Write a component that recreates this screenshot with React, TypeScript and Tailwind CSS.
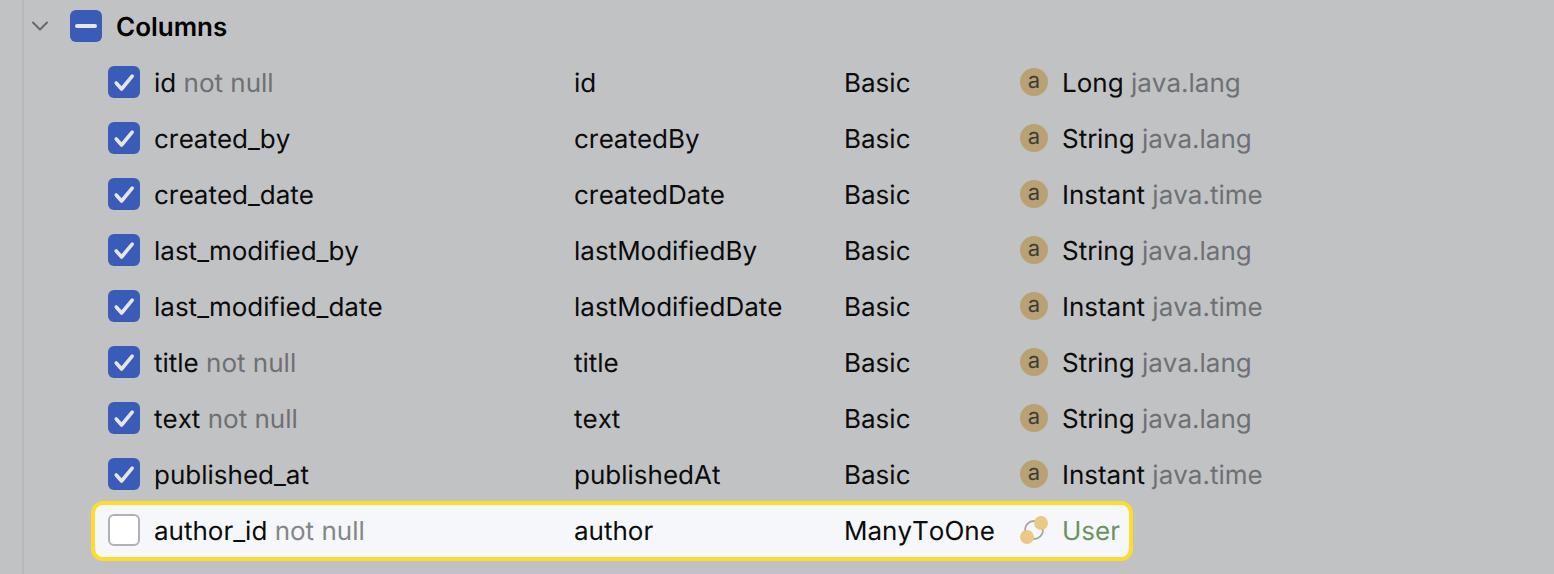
const columns = [
  { name: "id", note: "not null", attr: "id", kind: "Basic", type: "Long", pkg: "java.lang" },
  { name: "created_by", attr: "createdBy", kind: "Basic", type: "String", pkg: "java.lang" },
  { name: "created_date", attr: "createdDate", kind: "Basic", type: "Instant", pkg: "java.time" },
  { name: "last_modified_by", attr: "lastModifiedBy", kind: "Basic", type: "String", pkg: "java.lang" },
  { name: "last_modified_date", attr: "lastModifiedDate", kind: "Basic", type: "Instant", pkg: "java.time" },
  { name: "title", note: "not null", attr: "title", kind: "Basic", type: "String", pkg: "java.lang" },
  { name: "text", note: "not null", attr: "text", kind: "Basic", type: "String", pkg: "java.lang" },
  { name: "published_at", attr: "publishedAt", kind: "Basic", type: "Instant", pkg: "java.time" },
];

function CheckedBox() {
  return (
    <span className="flex h-8 w-8 shrink-0 items-center justify-center rounded-[6px] bg-[#3a5cb8]">
      <svg width="22" height="22" viewBox="0 0 22 22" fill="none">
        <path d="M3.2 12L8.6 18L19.2 5.2" stroke="#e4e6ea" strokeWidth="3.6" strokeLinecap="round" strokeLinejoin="round" />
      </svg>
    </span>
  );
}

function AttributeIcon() {
  return (
    <span className="flex h-7 w-7 shrink-0 items-center justify-center rounded-full bg-[#b9a173] pb-[3px] text-[22px] leading-none text-[#3d3d3d]">
      a
    </span>
  );
}

function RelationIcon() {
  return (
    <svg width="28" height="28" viewBox="0 0 28 28" fill="none" className="shrink-0">
      <circle cx="14" cy="14" r="9" stroke="#a3a4a6" strokeWidth="1.8" />
      <circle cx="21" cy="7" r="7" fill="#eac885" />
      <circle cx="7" cy="21" r="7" fill="#eac885" />
    </svg>
  );
}

export default function App() {
  return (
    <div className="h-[574px] w-[1554px] overflow-hidden bg-[#c1c2c4] pl-[22px] font-['Inter',sans-serif] text-[26px] text-[#0b0b0b] [font-kerning:none] [text-rendering:geometricPrecision]">
      <div className="h-full border-l-2 border-[#b7b8ba]">
        <div className="flex h-[54px] items-center pb-[2px] pl-[4px]">
          <svg width="24" height="24" viewBox="0 0 24 24" fill="none" className="shrink-0">
            <path d="M5 8.5L12 15.5L19 8.5" stroke="#66686c" strokeWidth="2" strokeLinecap="round" strokeLinejoin="round" />
          </svg>
          <span className="ml-[18px] flex h-8 w-8 items-center justify-center rounded-[6px] bg-[#3a5cb8]">
            <span className="h-[4px] w-[22px] rounded-full bg-[#e4e6ea]" />
          </span>
          <span className="ml-[14px] pt-[2px] font-semibold text-black">Columns</span>
        </div>
        <div className="flex flex-col pl-[84px]">
          {columns.map((col) => (
            <div key={col.name} className="flex h-14 items-center">
              <CheckedBox />
              <span className="ml-[14px] w-[420px] shrink-0 pt-[2px]">
                {col.name}
                {col.note && <span className="text-[#6f7074]"> {col.note}</span>}
              </span>
              <span className="w-[270px] shrink-0 pt-[2px]">{col.attr}</span>
              <span className="w-[176px] shrink-0 pt-[2px]">{col.kind}</span>
              <AttributeIcon />
              <span className="ml-[14px] pt-[2px]">
                {col.type} <span className="text-[#6f7074]">{col.pkg}</span>
              </span>
            </div>
          ))}
          <div className="-mx-[17px] -mt-[1px] flex h-[60px] w-[1042px] items-center rounded-[12px] border-4 border-[#ffdb2e] bg-[#f6f7fa] pb-[2px] pl-[13px]">
            <span className="h-8 w-8 shrink-0 rounded-[6px] border-2 border-[#b0b1b4] bg-white" />
            <span className="ml-[14px] w-[420px] shrink-0 pt-[2px]">
              author_id <span className="text-[#85868a]">not null</span>
            </span>
            <span className="w-[270px] shrink-0 pt-[2px]">author</span>
            <span className="w-[176px] shrink-0 pt-[2px]">ManyToOne</span>
            <RelationIcon />
            <span className="ml-[14px] pt-[2px] text-[#6c9261]">User</span>
          </div>
        </div>
      </div>
    </div>
  );
}
